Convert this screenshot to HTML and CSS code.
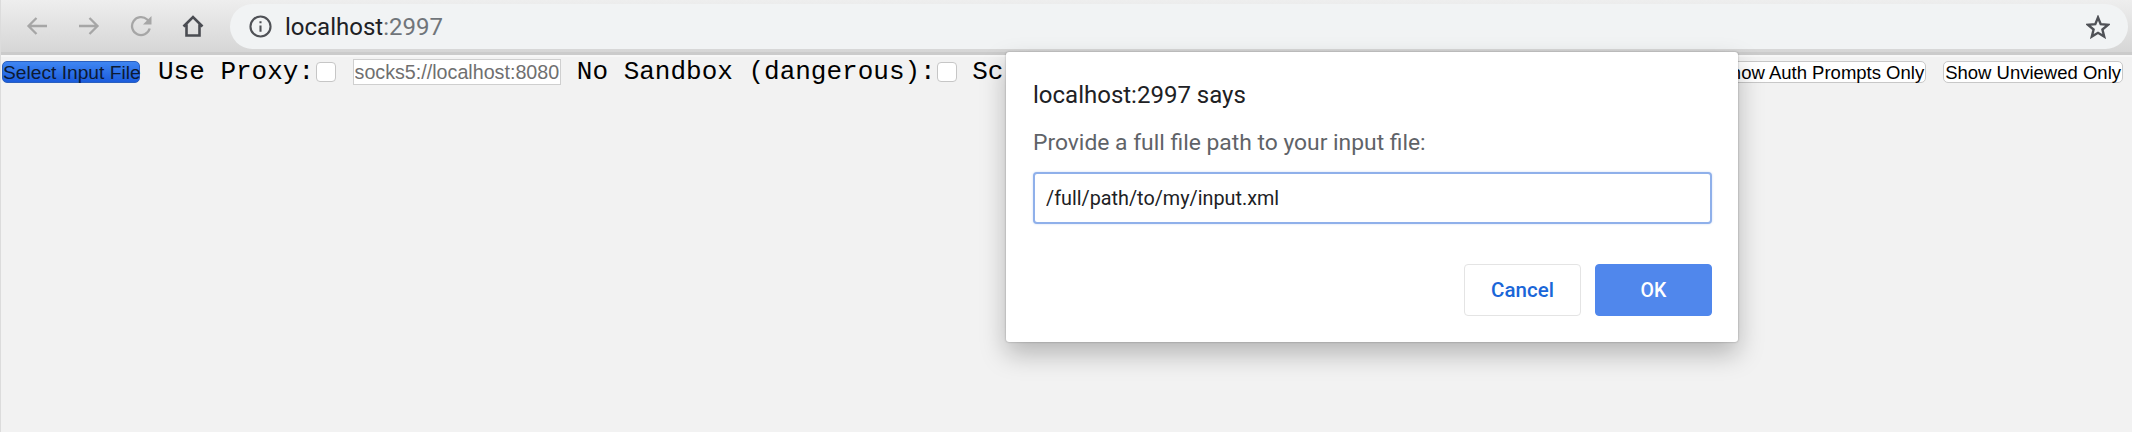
FILE: index.html
```html
<!DOCTYPE html>
<html lang="en">
<head>
<meta charset="utf-8">
<title>localhost:2997</title>
<link rel="stylesheet" href="styles.css">
</head>
<body>
<header class="chrome">
  <nav class="nav">
    <svg class="nav-icon" viewBox="0 0 22 22"><path class="st-off" d="M21 11H2.5M10.5 3L2.5 11L10.5 19"/></svg>
    <svg class="nav-icon" viewBox="0 0 22 22"><path class="st-off" d="M1 11H19.5M11.5 3L19.5 11L11.5 19"/></svg>
    <svg class="nav-icon" viewBox="0 0 22 22"><path class="st-off" d="M19.7 13.5A9 9 0 1 1 17.2 4.5L20 7.5"/><path class="fill-off" d="M21.5 1V9.5H13Z"/></svg>
    <svg class="nav-icon" viewBox="0 0 22 22"><path class="st-on" d="M1.5 11.5L11 2L20.5 11.5M4.5 9.5V20.5H17.5V9.5"/></svg>
  </nav>
  <div class="omnibox">
    <svg class="info" viewBox="0 0 22 22"><circle cx="11" cy="11" r="9.6"/><path d="M11 10V16M11 6V8"/></svg>
    <span class="url">localhost<span class="port">:2997</span></span>
    <svg class="star" viewBox="0 0 24 24"><path d="M12 2.5L14.7 9.2L22 9.8L16.4 14.5L18.2 21.6L12 17.8L5.8 21.6L7.6 14.5L2 9.8L9.3 9.2Z"/></svg>
  </div>
</header>
<main class="page">
  <button class="btn btn-primary" type="button">Select Input File</button>
  <span class="label label-first">Use Proxy:</span>
  <span class="check"></span>
  <input class="proxy" type="text" value="socks5://localhost:8080" readonly>
  <span class="label label-next">No Sandbox (dangerous):</span>
  <span class="check"></span>
  <span class="label label-last">Scr</span>
  <div class="filters">
    <button class="btn" type="button">Show Auth Prompts Only</button>
    <button class="btn" type="button">Show Unviewed Only</button>
  </div>
</main>
<section class="dialog">
  <h1 class="dialog-title">localhost:2997 says</h1>
  <p class="dialog-msg">Provide a full file path to your input file:</p>
  <input class="dialog-input" type="text" value="/full/path/to/my/input.xml" readonly>
  <div class="dialog-actions">
    <button class="dlg-btn dlg-cancel" type="button">Cancel</button>
    <button class="dlg-btn dlg-ok" type="button">OK</button>
  </div>
</section>
</body>
</html>
```
FILE: styles.css
```css
* { box-sizing: border-box; }
html, body { margin: 0; height: 100%; overflow: hidden; }
body { background: #f2f2f2; font-family: "Liberation Sans", Arial, sans-serif; position: relative; width: 2132px; height: 432px; border-left: 1px solid #dcdcdc; }
.chrome { height: 57px; padding: 4px 4px 0 0; display: flex; align-items: flex-start; background: linear-gradient(#eeeeee, #d6d6d6 52px, #cbcbcb 52px, #cbcbcb 55px, #f7f7f7 55px); }
.nav { width: 229px; height: 44px; flex: none; padding-left: 25px; display: flex; align-items: center; gap: 30px; }
.nav-icon { width: 22px; height: 22px; fill: none; flex: none; }
.st-off { stroke: #a6a6a6; stroke-width: 2.3; fill: none; }
.fill-off { fill: #a6a6a6; }
.st-on { stroke: #4a4c52; stroke-width: 2.6; fill: none; }
.omnibox { flex: 1; height: 45px; border-radius: 23px; background: #f1f3f4; display: flex; align-items: center; padding: 0 18px 0 19px; }
.info { width: 23px; height: 23px; fill: none; stroke: #4f5156; stroke-width: 2; flex: none; }
.url { margin-left: 13px; flex: 1; font: 24px Roboto, sans-serif; color: #202124; }
.port { color: #70757a; }
.star { width: 24px; height: 24px; fill: none; stroke: #4f5156; stroke-width: 2.4; flex: none; }
.page { display: flex; align-items: center; height: 26px; margin-top: 2px; padding: 0 9px 0 1px; white-space: nowrap; }
.btn { height: 22px; padding: 0 1px; font: 18.5px "Liberation Sans", Arial, sans-serif; color: #000; background: #fff; border: 1px solid #c8c8c8; border-radius: 5px; flex: none; }
.btn-primary { width: 138px; padding: 0; font-size: 19.2px; white-space: nowrap; color: #0c1a33; background: linear-gradient(#3f86f2, #1b5cdc); border-color: #2a5fbe; }
.label { font: 26px "Liberation Mono", "Courier New", monospace; color: #000; }
.label-first { margin-left: 18px; }
.label-next { margin-left: 16.3px; }
.label-last { margin-left: 15px; }
.check { width: 20px; height: 20px; margin-left: 1.5px; background: #fff; border: 1px solid #c6c6c6; border-radius: 4px; flex: none; }
.proxy { width: 208px; height: 26px; margin-left: 17px; padding: 0 1px; font: 19.7px "Liberation Sans", Arial, sans-serif; color: #6f6f6f; background: #fff; border: 1px solid #cfcfcf; border-radius: 0; outline: none; flex: none; }
.filters { margin-left: auto; display: flex; gap: 17px; }
.dialog { position: absolute; left: 1005px; top: 52px; width: 732px; height: 290px; padding: 28px 26px 0 27px; background: #fff; border-radius: 3px; box-shadow: 0 0 2px rgba(0,0,0,.35), 0 12px 26px rgba(0,0,0,.25); }
.dialog-title { margin: 0; font: 400 24px/30px Roboto, sans-serif; color: #202124; }
.dialog-msg { margin: 20px 0 0; font: 22.85px/26px Roboto, sans-serif; color: #5f6368; }
.dialog-input { display: block; width: 100%; height: 52px; margin-top: 16px; padding: 0 11px; font: 19.8px Roboto, sans-serif; color: #202124; border: 2px solid #8fb0ea; border-radius: 4px; outline: none; background: #fff; box-shadow: 0 0 2px rgba(143,176,234,.5); }
.dialog-actions { display: flex; justify-content: flex-end; gap: 14px; margin-top: 40px; }
.dlg-btn { width: 117px; height: 52px; font: 500 20.5px Roboto, sans-serif; border-radius: 4px; }
.dlg-cancel { background: #fff; color: #1a66d8; border: 1px solid #e4e4e4; }
.dlg-ok { background: #5087ec; color: #fff; border: 1px solid #5087ec; font-size: 19.5px; }
```
